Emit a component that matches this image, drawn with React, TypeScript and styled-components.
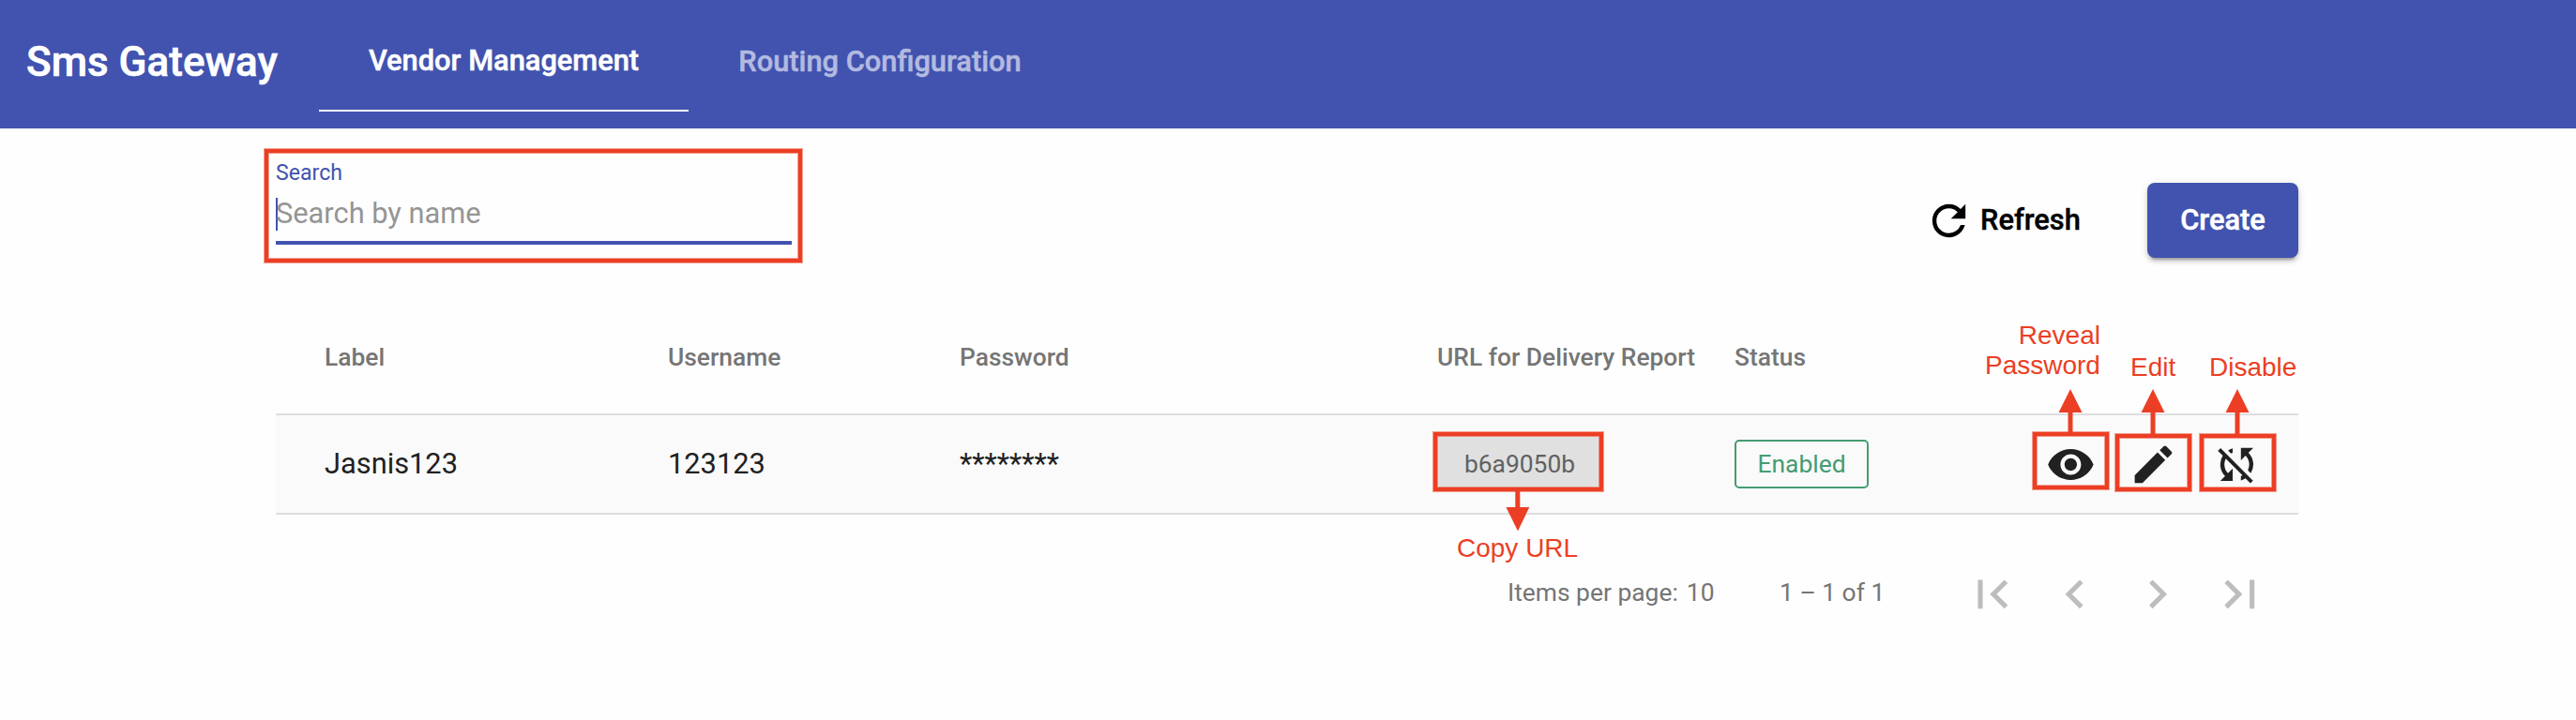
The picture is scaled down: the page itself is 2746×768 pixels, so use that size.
import React from "react";
import styled, { createGlobalStyle } from "styled-components";
import {
  MdRefresh,
  MdVisibility,
  MdEdit,
  MdSyncDisabled,
  MdFirstPage,
  MdChevronLeft,
  MdChevronRight,
  MdLastPage,
} from "react-icons/md";

const PRIMARY = "#4153af";
const MARK = "#ec3e24";

const GlobalStyle = createGlobalStyle`
  body {
    margin: 0;
    background: #fefefe;
    font-family: Roboto, "Liberation Sans", sans-serif;
    color: #212121;
  }
`;

const Toolbar = styled.header`
  display: flex;
  height: 137px;
  box-sizing: border-box;
  padding-left: 28px;
  background: ${PRIMARY};
`;

const Title = styled.h1`
  width: 312px;
  margin: 0;
  font-size: 44px;
  font-weight: 500;
  line-height: 132px;
  white-space: nowrap;
  color: #fff;
  -webkit-text-stroke: 0.6px;
`;

const Tab = styled.a<{ $width: number; $active?: boolean }>`
  width: ${(p) => p.$width}px;
  height: 119px;
  box-sizing: border-box;
  border-bottom: 2px solid ${(p) => (p.$active ? "#fff" : "transparent")};
  font-size: 30.8px;
  font-weight: 500;
  line-height: ${(p) => (p.$active ? 130 : 132)}px;
  text-align: center;
  white-space: nowrap;
  color: ${(p) => (p.$active ? "#fff" : "#b3bae0")};
  -webkit-text-stroke: 0.5px;
`;

const Content = styled.main`
  width: 2156px;
  margin-left: 294px;
`;

const Actions = styled.div`
  display: flex;
  justify-content: space-between;
  height: 162px;
`;

const Marked = styled.div`
  position: relative;
  box-sizing: border-box;
  border: 4px solid ${MARK};
  box-shadow: 0 0 0 1px rgba(236, 62, 36, 0.5),
    inset 0 0 0 1px rgba(236, 62, 36, 0.5);
`;

const SearchBox = styled(Marked)`
  width: 573px;
  height: 121px;
  margin: 22px 0 0 -12px;
  padding: 5px 7px 0 8px;
`;

const SearchLabel = styled.label`
  display: block;
  font-size: 23.1px;
  line-height: 33px;
  color: ${PRIMARY};
`;

const SearchField = styled.div`
  height: 46px;
  margin-top: 10px;
  border-bottom: 4px solid ${PRIMARY};
`;

const Placeholder = styled.div`
  width: 240px;
  height: 35px;
  box-sizing: border-box;
  border-left: 2px solid ${PRIMARY};
  font-size: 30.8px;
  line-height: 34px;
  text-indent: -2px;
  white-space: nowrap;
  color: #959595;
`;

const Buttons = styled.div`
  display: flex;
  height: 80px;
  margin-top: 58px;
`;

const RefreshButton = styled.div`
  display: flex;
  align-items: center;
  width: 238px;
  font-size: 30.8px;
  font-weight: 500;
  line-height: 80px;
  color: #000;
  -webkit-text-stroke: 0.4px;

  svg {
    margin-right: 7px;
    stroke: none;
  }
`;

const CreateButton = styled.div`
  width: 161px;
  border-radius: 8px;
  background: ${PRIMARY};
  box-shadow: 0 6px 2px -4px rgba(0, 0, 0, 0.2), 0 4px 4px rgba(0, 0, 0, 0.14),
    0 2px 10px rgba(0, 0, 0, 0.12);
  font-size: 30.8px;
  font-weight: 500;
  line-height: 79px;
  text-align: center;
  color: #fff;
  -webkit-text-stroke: 0.5px;
`;

const Row = styled.div`
  display: grid;
  grid-template-columns: 366px 311px 509px 317px 318px 1fr;
  align-items: center;
  height: 104px;
  padding-left: 52px;
  border-bottom: 2px solid #dedede;
  background: #fafafa;
  font-size: 30.8px;
  line-height: 40px;
`;

const HeadRow = styled(Row)`
  height: 120px;
  padding-top: 22px;
  background: none;
  font-size: 26.4px;
  font-weight: 500;
  color: #757575;
`;

const UrlChip = styled(Marked)`
  width: 181px;
  height: 63px;
  margin-left: -4px;
  margin-top: -5px;
  padding-left: 3px;
  background: #e0e0e0;
  font-size: 26.4px;
  line-height: 60px;
  text-align: center;
  color: #616161;
`;

const StatusChip = styled.div`
  width: 143px;
  height: 52px;
  box-sizing: border-box;
  border: 2px solid #459c70;
  border-radius: 5px;
  font-size: 26.4px;
  line-height: 48px;
  text-align: center;
  color: #459c70;
`;

const IconGroup = styled.div`
  display: flex;
  height: 64px;
  margin-top: -4px;
`;

const IconButton = styled(Marked)<{ $gap: number; $drop?: number }>`
  display: flex;
  align-items: center;
  justify-content: center;
  width: 81px;
  height: 61px;
  margin-top: ${(p) => p.$drop || 0}px;
  margin-right: ${(p) => p.$gap}px;
  padding-top: ${(p) => (p.$drop ? 4 : 8)}px;
`;

const DisableButton = styled(IconButton)`
  padding-right: 3px;
`;

const Note = styled.span<{ $left: number; $top: number }>`
  position: absolute;
  left: ${(p) => p.$left}px;
  top: ${(p) => p.$top}px;
  font-family: "Liberation Sans", Arial, sans-serif;
  font-size: 28px;
  line-height: 32px;
  text-align: right;
  white-space: pre;
  color: ${MARK};
`;

const ArrowSvg = styled.svg<{ $left: number; $top: number }>`
  position: absolute;
  left: ${(p) => p.$left}px;
  top: ${(p) => p.$top}px;
  fill: ${MARK};
`;

const Paginator = styled.div`
  display: flex;
  align-items: center;
  height: 62px;
  padding: 54px 0 0 1313px;
  font-size: 26.4px;
  line-height: 58px;
  white-space: nowrap;
  color: #757575;
`;

const PageSize = styled.div`
  display: flex;
  gap: 9px;
  width: 290px;
  margin-top: -4px;
`;

const PageRange = styled.div`
  width: 196px;
  margin-top: -4px;
`;

const PageNav = styled.div`
  display: flex;
  gap: 26.4px;
  color: #bdbdbd;
`;

type ArrowProps = { left: number; top: number; length: number; down?: boolean };

const Arrow = ({ left, top, length, down }: ArrowProps) => (
  <ArrowSvg $left={left} $top={top} width={26} height={length}>
    <path
      d={
        down
          ? `M10.3 0h5v${length - 25}h10L13 ${length}.5.5 ${length - 25}h9.8z`
          : `M13 0l12.5 25H15.5v${length - 25}h-5V25H.5z`
      }
    />
  </ArrowSvg>
);

const App = () => {
  return (
    <>
      <GlobalStyle />
      <Toolbar>
        <Title>Sms Gateway</Title>
        <Tab $width={394} $active>
          Vendor Management
        </Tab>
        <Tab $width={408}>Routing Configuration</Tab>
      </Toolbar>

      <Content>
        <Actions>
          <SearchBox>
            <SearchLabel>Search</SearchLabel>
            <SearchField>
              <Placeholder>Search by name</Placeholder>
            </SearchField>
          </SearchBox>
          <Buttons>
            <RefreshButton>
              <MdRefresh size={53} />
              Refresh
            </RefreshButton>
            <CreateButton>Create</CreateButton>
          </Buttons>
        </Actions>

        <HeadRow>
          <div>Label</div>
          <div>Username</div>
          <div>Password</div>
          <div>URL for Delivery Report</div>
          <div>Status</div>
        </HeadRow>
        <Row>
          <div>Jasnis123</div>
          <div>123123</div>
          <div>********</div>
          <UrlChip>
            b6a9050b
            <Arrow left={72.5} top={59} length={42} down />
            <Note $left={21} $top={104}>
              Copy URL
            </Note>
          </UrlChip>
          <StatusChip>Enabled</StatusChip>
          <IconGroup>
            <IconButton $gap={7}>
              <MdVisibility size={52.8} />
              <Arrow left={23} top={-50} length={46} />
              <Note $left={-55} $top={-123}>
                {"Reveal\nPassword"}
              </Note>
            </IconButton>
            <IconButton $gap={9} $drop={2}>
              <MdEdit size={52.8} />
              <Arrow left={23} top={-52} length={48} />
              <Note $left={12} $top={-91}>
                Edit
              </Note>
            </IconButton>
            <DisableButton $gap={0} $drop={2}>
              <MdSyncDisabled size={52.8} />
              <Arrow left={23} top={-52} length={48} />
              <Note $left={6} $top={-91}>
                Disable
              </Note>
            </DisableButton>
          </IconGroup>
        </Row>

        <Paginator>
          <PageSize>
            <span>Items per page:</span>
            <span>10</span>
          </PageSize>
          <PageRange>1 – 1 of 1</PageRange>
          <PageNav>
            <MdFirstPage size={61.6} />
            <MdChevronLeft size={61.6} />
            <MdChevronRight size={61.6} />
            <MdLastPage size={61.6} />
          </PageNav>
        </Paginator>
      </Content>
    </>
  );
};

export default App;
